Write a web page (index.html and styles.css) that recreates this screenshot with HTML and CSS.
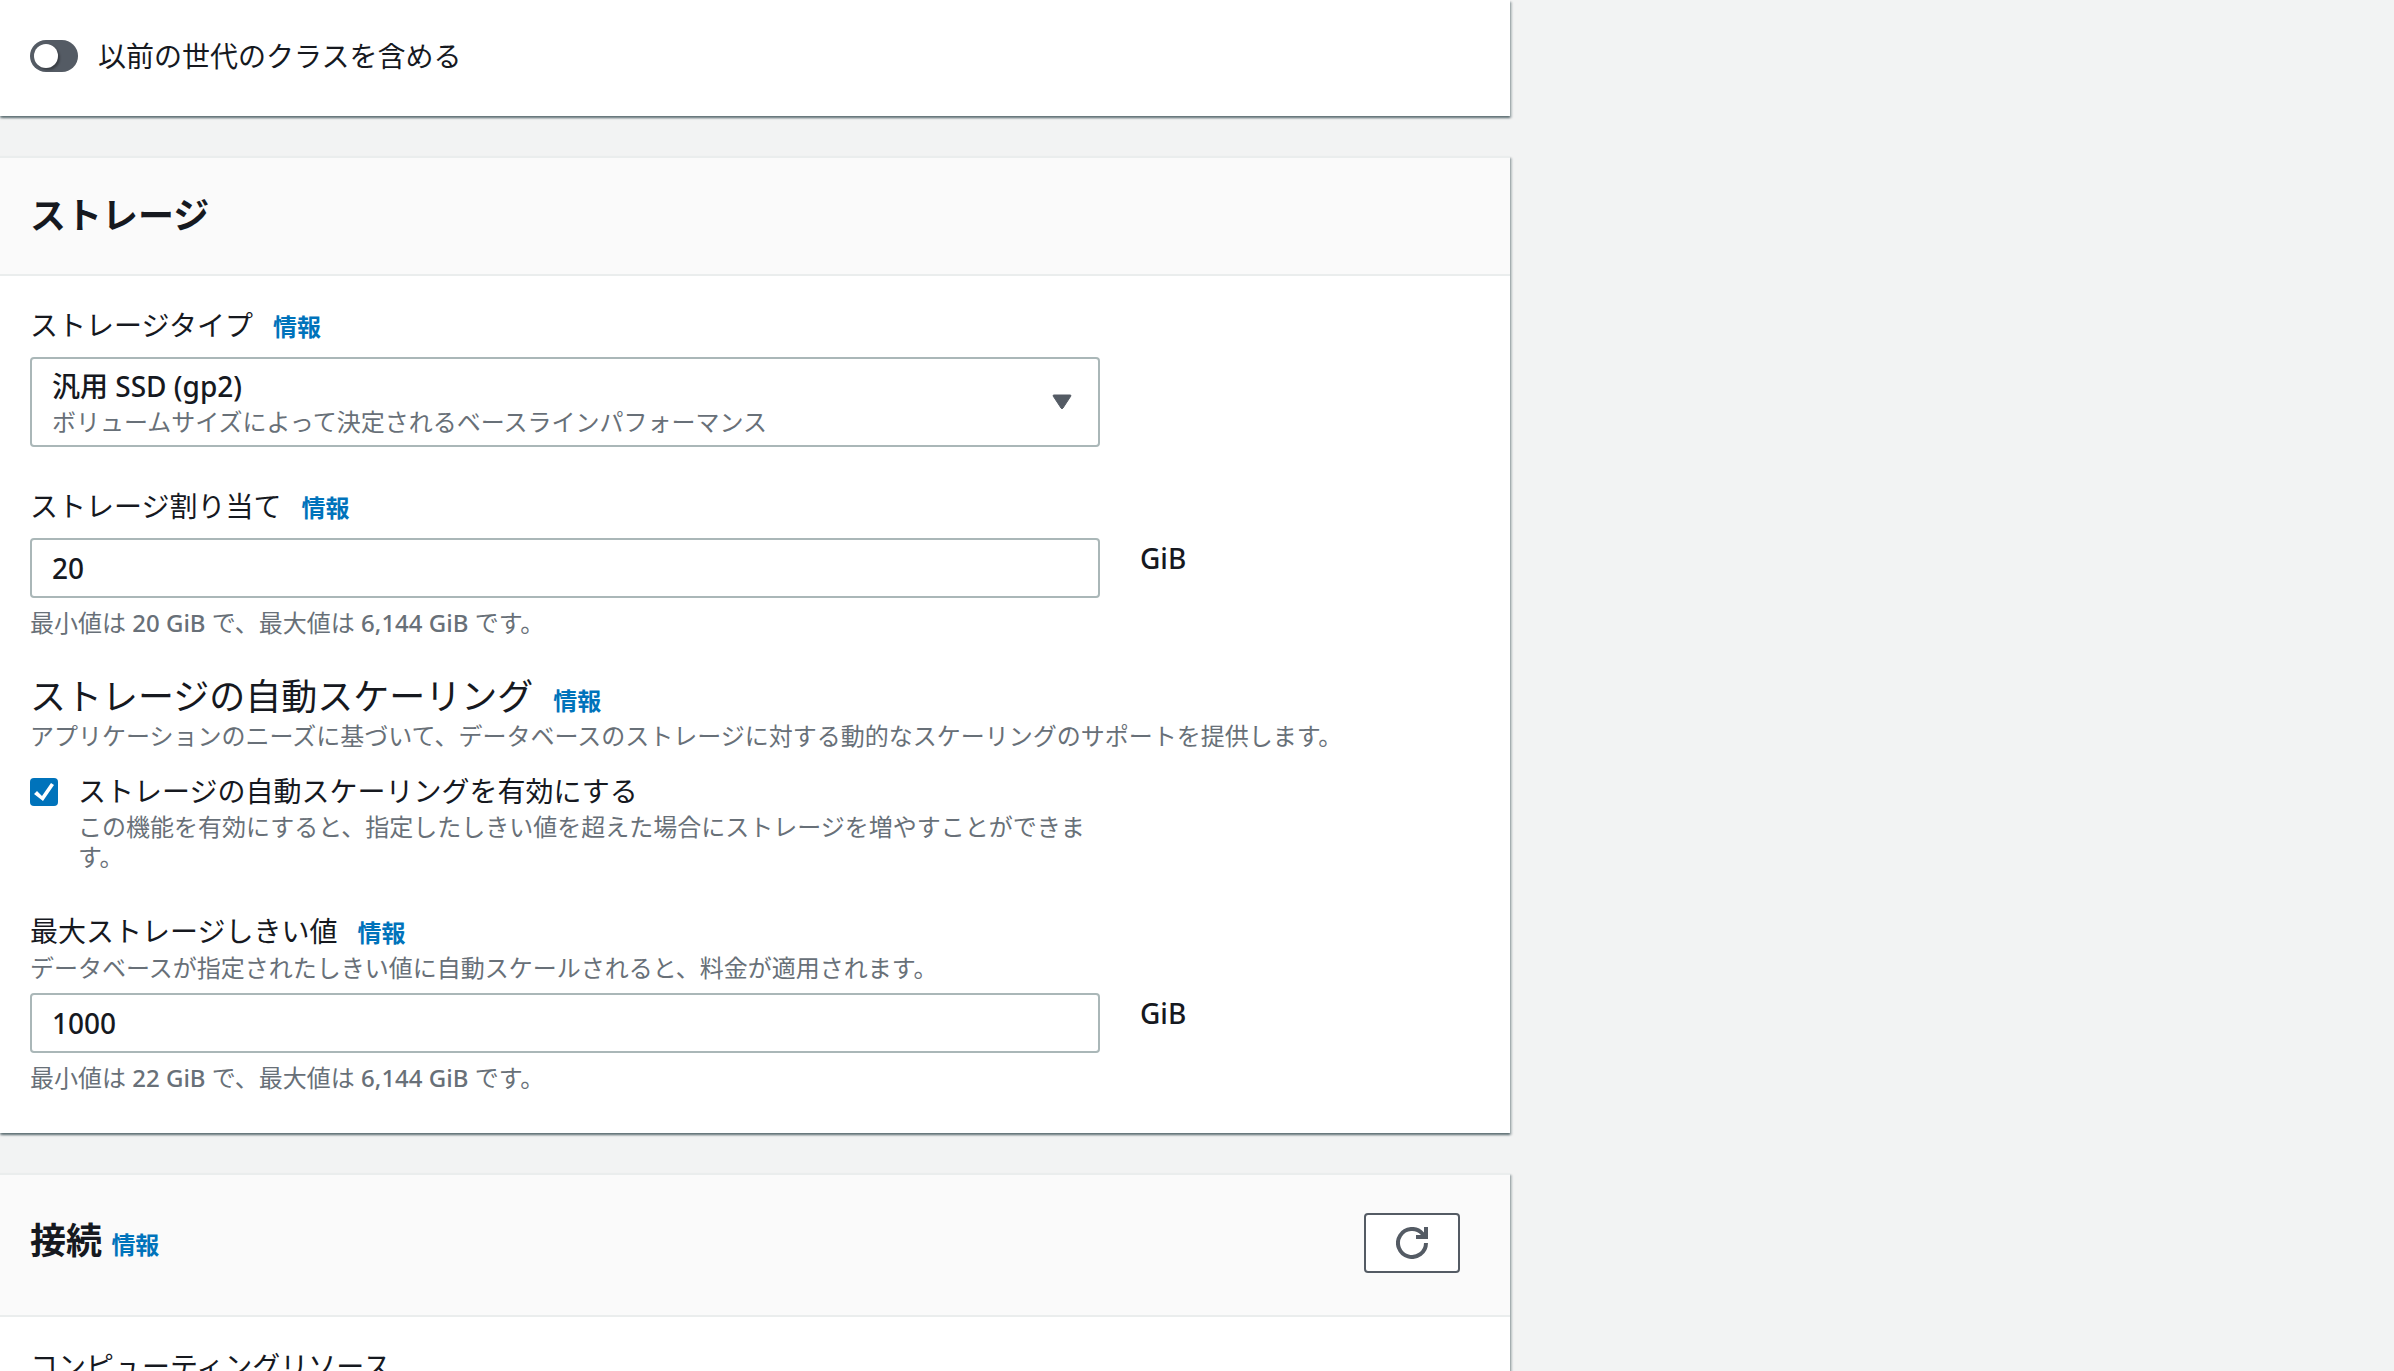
FILE: index.html
```html
<!DOCTYPE html>
<html lang="ja">
<head>
    <meta charset="UTF-8">
    <title>データベースの作成</title>
    <link rel="stylesheet" href="styles.css">
</head>
<body>
    <main class="content">
        <!--インスタンスクラス-->
        <section class="card card-first">
            <label class="toggle-row">
                <input type="checkbox" class="toggle" role="switch">
                <span>以前の世代のクラスを含める</span>
            </label>
        </section>

        <!--ストレージ-->
        <section class="card">
            <header class="card-header">
                <h2>ストレージ</h2>
            </header>
            <div class="card-body">
                <div class="field">
                    <div class="label-row">
                        <label for="storage-type">ストレージタイプ</label>
                        <a href="#" class="info">情報</a>
                    </div>
                    <div class="select-box">
                        <select id="storage-type" class="control" aria-describedby="storage-type-desc">
                            <option>汎用 SSD (gp2)</option>
                        </select>
                        <span class="select-desc" id="storage-type-desc">ボリュームサイズによって決定されるベースラインパフォーマンス</span>
                        <svg class="caret" width="20" height="16" viewBox="0 0 20 16"><path d="M2 1H18Q19.500 1 18.700 2.300L11 14Q10 15.500 9 14L1.300 2.300Q.5 1 2 1Z" fill="#545b64" stroke="#545b64" stroke-width="1"/></svg>
                    </div>
                </div>

                <div class="field">
                    <div class="label-row">
                        <label for="storage-size">ストレージ割り当て</label>
                        <a href="#" class="info">情報</a>
                    </div>
                    <div class="unit-row">
                        <input type="text" id="storage-size" class="control" value="20">
                        <span class="unit">GiB</span>
                    </div>
                    <p class="hint">最小値は <span class="en">20 GiB</span> で、最大値は <span class="en">6,144 GiB</span> です。</p>
                </div>

                <div class="field scaling">
                    <div class="label-row">
                        <h3>ストレージの自動スケーリング</h3>
                        <a href="#" class="info">情報</a>
                    </div>
                    <p class="desc">アプリケーションのニーズに基づいて、データベースのストレージに対する動的なスケーリングのサポートを提供します。</p>
                    <div class="check-row">
                        <input type="checkbox" id="autoscale" class="checkbox" checked>
                        <div>
                            <label for="autoscale">ストレージの自動スケーリングを有効にする</label>
                            <p class="desc">この機能を有効にすると、指定したしきい値を超えた場合にストレージを増やすことができます。</p>
                        </div>
                    </div>
                </div>

                <div class="field">
                    <div class="label-row with-desc">
                        <label for="storage-max">最大ストレージしきい値</label>
                        <a href="#" class="info">情報</a>
                    </div>
                    <p class="desc">データベースが指定されたしきい値に自動スケールされると、料金が適用されます。</p>
                    <div class="unit-row">
                        <input type="text" id="storage-max" class="control" value="1000">
                        <span class="unit">GiB</span>
                    </div>
                    <p class="hint">最小値は <span class="en">22 GiB</span> で、最大値は <span class="en">6,144 GiB</span> です。</p>
                </div>
            </div>
        </section>

        <!--接続-->
        <section class="card">
            <header class="card-header with-action">
                <h2>接続 <a href="#" class="info">情報</a></h2>
                <button type="button" class="refresh" aria-label="更新">
                    <svg width="32" height="32" viewBox="0 0 32 32" fill="none" stroke="#545b64" stroke-width="4"><path d="M30 16A14 14 0 1 1 26.500 6.700L29 10"/><path d="M20 10H30V0"/></svg>
                </button>
            </header>
            <div class="card-body">
                <div class="label-row">
                    <span>コンピューティングリソース</span>
                </div>
            </div>
        </section>
    </main>
</body>
</html>
```

FILE: styles.css
```css
* {
    box-sizing: border-box;
}

html {
    overflow: hidden;
}

body {
    margin: 0;
    background: #f2f3f3;
    color: #16191f;
    font-family: "Noto Sans", "Noto Sans CJK JP", sans-serif;
    font-size: 28px;
    line-height: 36px;
}

h2, h3, p {
    margin: 0;
}

.content {
    width: 63.07%;
    display: flex;
    flex-direction: column;
    gap: 40px;
    height: 100vh;
}

/*カード*/
.card {
    flex: none;
    background: #fff;
    border-top: 2px solid #eaeded;
    box-shadow: 0 2px 2px 0 rgba(0, 28, 36, 0.5), 2px 2px 2px 0 rgba(0, 28, 36, 0.2);
}

.card-first {
    border-top: 0;
    padding: 38px 30px 42px;
}

.card-header {
    display: flex;
    align-items: center;
    justify-content: space-between;
    padding: 36px 50px 36px 30px;
    background: #fafafa;
    border-bottom: 2px solid #eaeded;
}

.with-action {
    padding-top: 38px;
    padding-bottom: 42px;
}

h2 {
    font-size: 36px;
    line-height: 44px;
    font-weight: 700;
}

.card-body {
    padding: 31px 30px 40px;
}

/*スイッチ*/
.toggle-row {
    display: flex;
    align-items: center;
    gap: 20px;
}

.toggle {
    appearance: none;
    width: 48px;
    height: 32px;
    margin: 0;
    padding: 4px;
    border-radius: 16px;
    background: #545b64;
}

.toggle::before {
    content: "";
    display: block;
    width: 24px;
    height: 24px;
    border-radius: 50%;
    background: #fff;
    box-shadow: 2px 2px 2px rgba(0, 0, 0, 0.3);
}

/*フォーム*/
.field {
    margin-bottom: 41px;
}

.field:last-child {
    margin-bottom: 0;
}

.label-row {
    display: flex;
    align-items: baseline;
    gap: 20px;
    height: 36px;
    margin-bottom: 14px;
}

.with-desc {
    margin-bottom: 4px;
}

.info {
    color: #0073bb;
    font-size: 24px;
    font-weight: 700;
    text-decoration: none;
}

.control {
    width: 100%;
    height: 60px;
    padding: 0 20px;
    border: 2px solid #aab7b8;
    border-radius: 4px;
    background: #fff;
    color: #16191f;
    font: inherit;
    font-weight: 500;
}

.select-box {
    display: grid;
    align-items: center;
    width: 73.8%;
}

.select-box > * {
    grid-area: 1 / 1;
}

.select-box .control {
    appearance: none;
    height: 90px;
    padding-bottom: 32px;
}

.select-desc {
    align-self: end;
    padding: 0 22px 10px;
    color: #687078;
    font-size: 24px;
    line-height: 30px;
    pointer-events: none;
}

.caret {
    justify-self: end;
    margin-right: 28px;
    pointer-events: none;
}

.unit-row {
    display: flex;
    gap: 40px;
}

.unit-row .control {
    width: 73.8%;
}

.unit {
    padding-top: 2px;
    font-weight: 500;
}

.en {
    font-weight: 500;
}

.hint, .desc {
    color: #687078;
    font-size: 24px;
    line-height: 30px;
}

.hint {
    margin-top: 10px;
}

.with-desc + .desc {
    margin-bottom: 10px;
}

/*自動スケーリング*/
.scaling {
    margin-top: -4px;
}

.scaling .label-row {
    height: 44px;
    margin-bottom: 2px;
}

h3 {
    font-size: 36px;
    line-height: 44px;
    font-weight: 400;
}

.check-row {
    display: flex;
    gap: 20px;
    width: 73.8%;
    margin-top: 22px;
}

.check-row label {
    display: block;
    margin-bottom: 3px;
}

.checkbox {
    appearance: none;
    flex: none;
    width: 28px;
    height: 28px;
    margin: 5px 0 0;
    border-radius: 4px;
    background: #0073bb;
}

.checkbox:checked::before {
    content: "";
    display: block;
    width: 28px;
    height: 28px;
    background: #fff;
    clip-path: polygon(4px 16px, 7px 13px, 12px 18px, 21px 5px, 24px 7px, 13px 23px);
}

/*更新ボタン*/
.refresh {
    display: flex;
    align-items: center;
    justify-content: center;
    width: 96px;
    height: 60px;
    padding: 0;
    border: 2px solid #545b64;
    border-radius: 4px;
    background: #fff;
}
```
